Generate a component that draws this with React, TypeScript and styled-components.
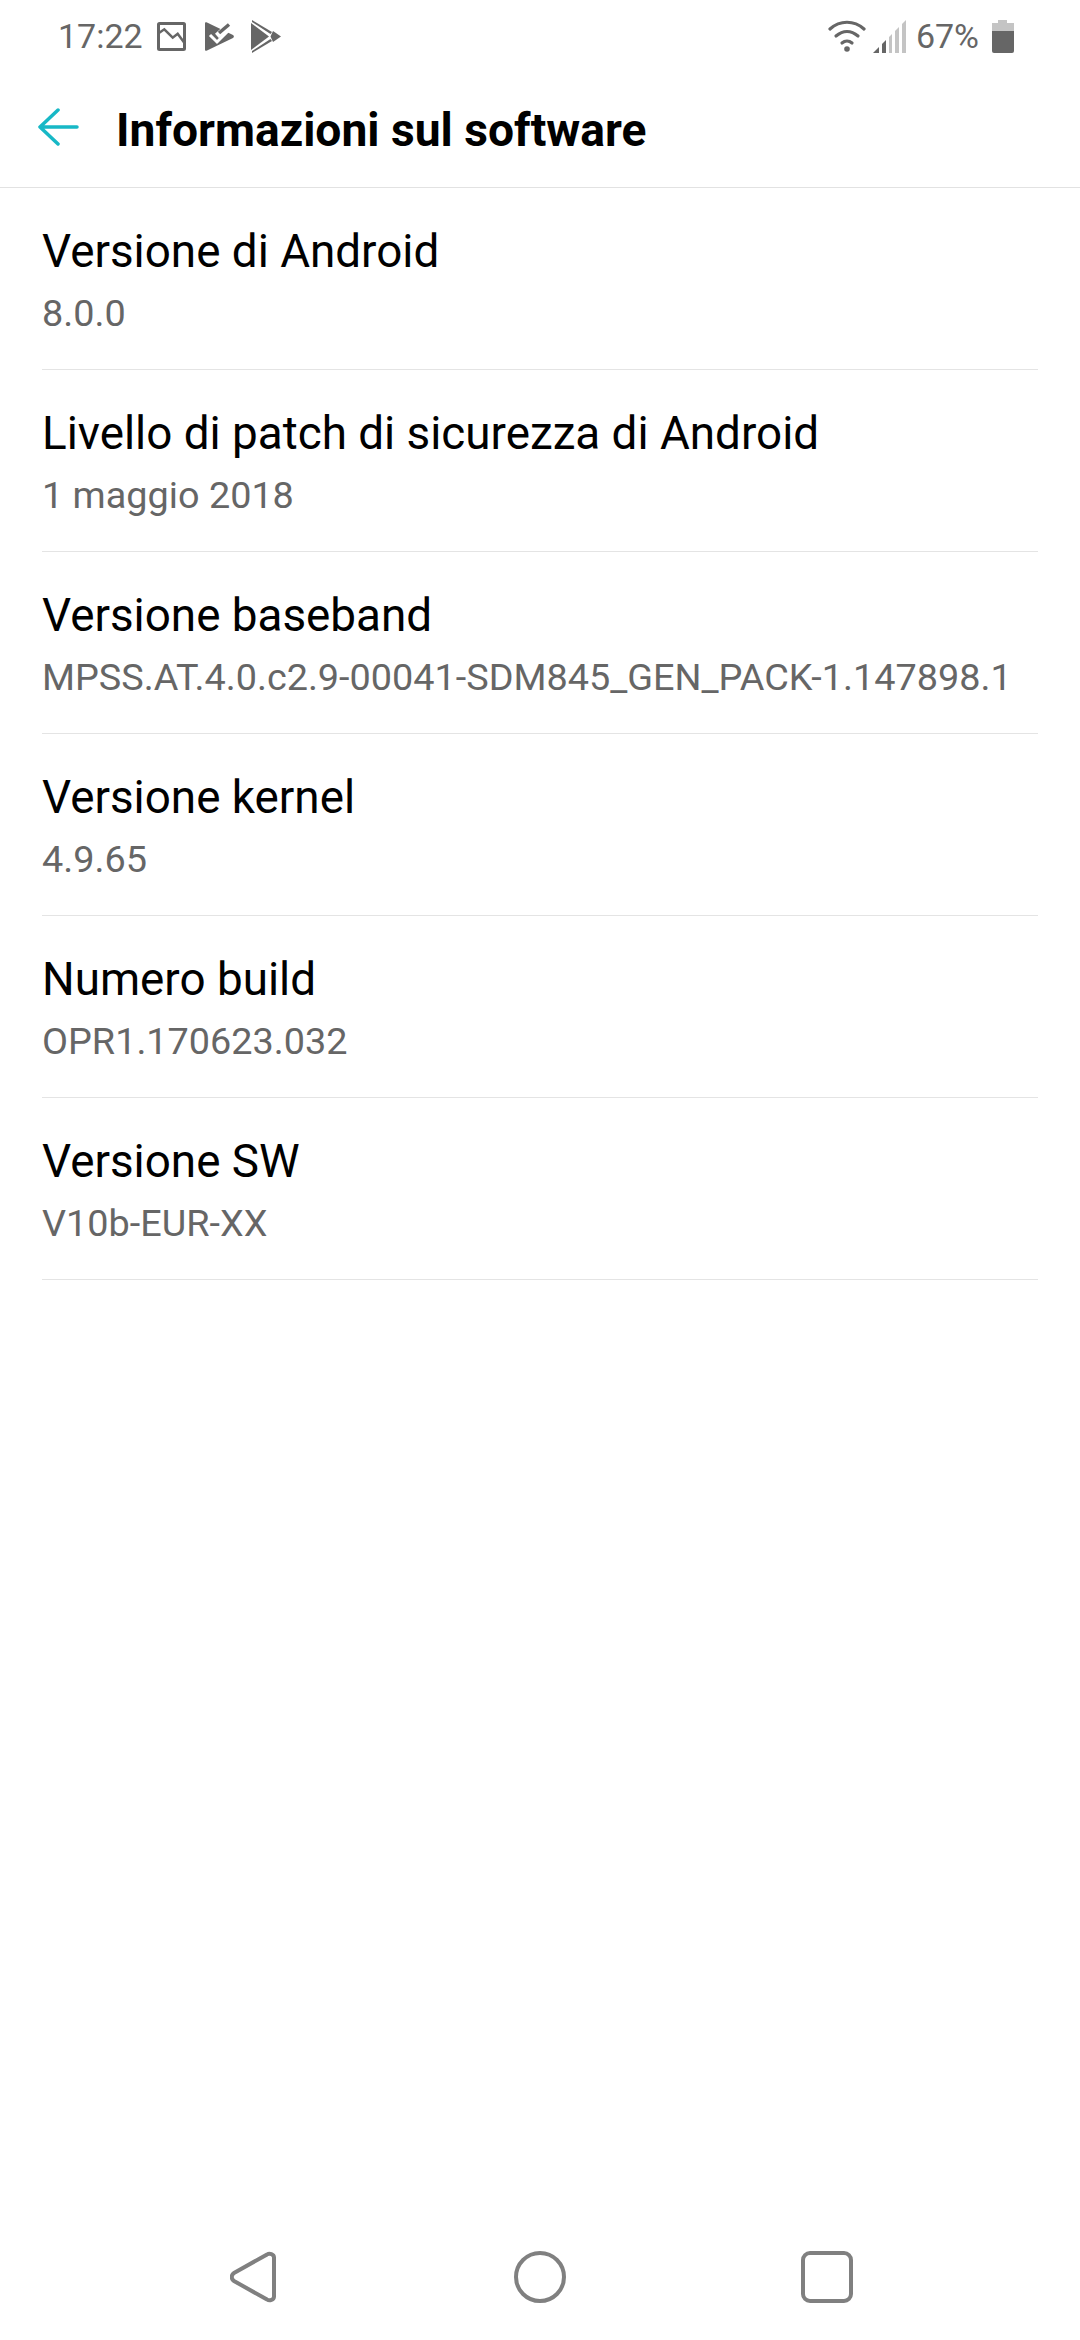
import React from "react";
import styled, { createGlobalStyle } from "styled-components";

const Global = createGlobalStyle`
  html, body {
    margin: 0;
    padding: 0;
    background: #fff;
    font-family: Roboto, "Noto Sans", sans-serif;
  }
`;

const Screen = styled.div`
  width: 1080px;
  height: 2340px;
  display: flex;
  flex-direction: column;
  background: #fff;
  overflow: hidden;
`;

const StatusBar = styled.div`
  height: 72px;
  flex-shrink: 0;
  display: flex;
  align-items: center;
  justify-content: space-between;
  padding: 0 66px 0 58px;
  color: #666;
  font-size: 34px;
`;

const StatusGroup = styled.div`
  display: flex;
  align-items: center;
`;

const Clock = styled.span`
  margin-right: 14px;
`;

const Percent = styled.span`
  margin: 0 13px 0 10px;
`;

const StatusIcon = styled.svg<{ $after?: number }>`
  display: block;
  margin-right: ${(p) => p.$after ?? 0}px;
`;

const Header = styled.div`
  height: 115px;
  flex-shrink: 0;
  display: flex;
  align-items: center;
  padding-left: 38px;
  border-bottom: 1px solid #e2e2e2;
`;

const BackIcon = styled.svg`
  width: 41px;
  height: 38px;
  margin-right: 37px;
  margin-top: -6px;
`;

const Title = styled.h1`
  margin: 0 0 -1px;
  font-size: 46.2px;
  font-weight: 700;
  color: #000;
`;

const List = styled.div`
  flex: 1;
  padding: 0 42px;
`;

const Row = styled.div`
  height: 182px;
  box-sizing: border-box;
  padding-top: 34px;
  border-bottom: 1px solid #e4e4e4;
`;

const RowTitle = styled.div`
  font-size: 45.8px;
  line-height: 60px;
  color: #000;
`;

const RowValue = styled.div`
  font-size: 37.8px;
  line-height: 50px;
  margin-top: 6px;
  color: #666;
  white-space: nowrap;
`;

const NavBar = styled.div`
  height: 89px;
  flex-shrink: 0;
  display: flex;
  align-items: flex-start;
  padding-left: 230px;
`;

const NavIcon = styled.svg<{ $width?: number; $after?: number }>`
  width: ${(p) => p.$width ?? 52}px;
  height: 52px;
  margin-right: ${(p) => p.$after ?? 0}px;
  fill: none;
  stroke: #808080;
  stroke-width: 4;
`;

const rows = [
  ["Versione di Android", "8.0.0"],
  ["Livello di patch di sicurezza di Android", "1 maggio 2018"],
  ["Versione baseband", "MPSS.AT.4.0.c2.9-00041-SDM845_GEN_PACK-1.147898.1"],
  ["Versione kernel", "4.9.65"],
  ["Numero build", "OPR1.170623.032"],
  ["Versione SW", "V10b-EUR-XX"],
];

export default function App() {
  return (
    <Screen>
      <Global />
      <StatusBar>
        <StatusGroup>
          <Clock>17:22</Clock>
          <StatusIcon $after={19} width="29" height="29" viewBox="0 0 29 29">
            <rect x="1.500" y="1.500" width="26" height="26" rx="1" fill="none" stroke="#666" strokeWidth="3" />
            <path d="M2.300 10.700l5-3.400 8.400 8.400 5-4 6.600 9" fill="none" stroke="#666" strokeWidth="2.500" />
          </StatusIcon>
          <StatusIcon $after={17} width="29" height="29" viewBox="0 0 29 29">
            <path d="M0 1.500C0 0 1 0 2 .5L28 13c1.200.7 1.200 2.300 0 3L2 28.500C1 29 0 29 0 27.500z" fill="#666" />
            <path d="M5 13l7 7 13-13" fill="none" stroke="#fff" strokeWidth="3" />
            <path d="M12 14L26 1.500" fill="none" stroke="#fff" strokeWidth="6" />
            <path d="M14 11l10-8.500" fill="none" stroke="#666" strokeWidth="3.500" />
          </StatusIcon>
          <StatusIcon width="30" height="33" viewBox="0 0 30 33">
            <path d="M0 3l18 13.500L0 30z" fill="#666" />
            <path d="M1 0l20 12-1.500 2L1 2z" fill="#666" />
            <path d="M1 33l20-12-1.500-2L1 31z" fill="#666" />
            <path d="M22 11l8 5.500-8 5.500-2.500-5.500z" fill="#666" />
          </StatusIcon>
        </StatusGroup>
        <StatusGroup>
          <StatusIcon $after={7} width="38" height="33" viewBox="0 0 38 33">
            <g fill="none" stroke="#666" strokeWidth="3.200" strokeLinecap="round">
              <path d="M2 9c10-9 24-9 34 0" />
              <path d="M8 16c7-6 15-6 22 0" />
              <path d="M14 23c3-2.500 7-2.500 10 0" />
            </g>
            <circle cx="19" cy="29" r="2.800" fill="#666" />
          </StatusIcon>
          <StatusIcon width="33" height="33" viewBox="0 0 33 33">
            <path d="M0 33l6-6v6z" fill="#666" />
            <path d="M9 33V24l4-4v13z" fill="#666" />
            <path d="M16 33V17l3-3v19zM22 33V11l4-4v26zM29 33V4l4-4v33z" fill="#c4c4c4" />
          </StatusIcon>
          <Percent>67%</Percent>
          <StatusIcon width="22" height="33" viewBox="0 0 22 33">
            <path d="M6 0h9v3h7v9H0V3h6z" fill="#c4c4c4" />
            <path d="M0 11h22v20a2 2 0 0 1-2 2H2a2 2 0 0 1-2-2z" fill="#666" />
          </StatusIcon>
        </StatusGroup>
      </StatusBar>
      <Header>
        <BackIcon viewBox="0 0 41 38" fill="none" stroke="#17b8c6" strokeWidth="3.500" strokeLinecap="round" strokeLinejoin="round">
          <path d="M39 19H2M20 2L2 19l18 17" />
        </BackIcon>
        <Title>Informazioni sul software</Title>
      </Header>
      <List>
        {rows.map(([label, value]) => (
          <Row key={label}>
            <RowTitle>{label}</RowTitle>
            <RowValue>{value}</RowValue>
          </Row>
        ))}
      </List>
      <NavBar>
        <NavIcon $width={46} $after={238} viewBox="0 0 46 52">
          <path d="M37 3.500c2.500-1.800 7-.5 7 3v39c0 3.500-4.500 4.800-7 3L4 30c-3-2-3-6 0-8z" />
        </NavIcon>
        <NavIcon $after={235} viewBox="0 0 52 52">
          <circle cx="26" cy="26" r="24" />
        </NavIcon>
        <NavIcon viewBox="0 0 52 52">
          <rect x="2" y="2" width="48" height="48" rx="7" />
        </NavIcon>
      </NavBar>
    </Screen>
  );
}
